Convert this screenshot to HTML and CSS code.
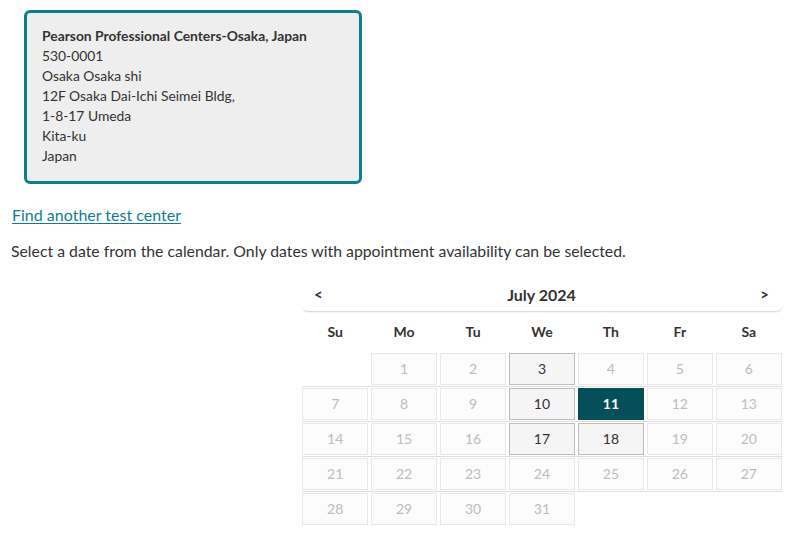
FILE: index.html
```html
<!DOCTYPE html>
<html lang="en">

<head>
    <meta charset="UTF-8" />
    <meta name="viewport" content="width=device-width, initial-scale=1.0" />
    <title>Select Appointment Date</title>
    <link rel="stylesheet" href="styles.css">
</head>

<body>
    <div class="page">
        <div class="center-card">
            <div class="center-name">Pearson Professional Centers-Osaka, Japan</div>
            <div>530-0001</div>
            <div>Osaka Osaka shi</div>
            <div>12F Osaka Dai-Ichi Seimei Bldg,</div>
            <div>1-8-17 Umeda</div>
            <div>Kita-ku</div>
            <div>Japan</div>
        </div>

        <a class="find-link" href="#">Find another test center</a>

        <p class="hint">Select a date from the calendar. Only dates with appointment availability can be selected.</p>

        <div class="calendar-wrap">
            <div class="calendar">
                <div class="cal-header">
                    <span class="nav">&lt;</span>
                    <span class="month">July 2024</span>
                    <span class="nav">&gt;</span>
                </div>
                <div class="weekdays">
                    <span>Su</span><span>Mo</span><span>Tu</span><span>We</span><span>Th</span><span>Fr</span><span>Sa</span>
                </div>
                <div class="week">
                    <span class="day empty"></span>
                    <span class="day">1</span>
                    <span class="day">2</span>
                    <span class="day open">3</span>
                    <span class="day">4</span>
                    <span class="day">5</span>
                    <span class="day">6</span>
                </div>
                <div class="week">
                    <span class="day">7</span>
                    <span class="day">8</span>
                    <span class="day">9</span>
                    <span class="day open">10</span>
                    <span class="day selected">11</span>
                    <span class="day">12</span>
                    <span class="day">13</span>
                </div>
                <div class="week">
                    <span class="day">14</span>
                    <span class="day">15</span>
                    <span class="day">16</span>
                    <span class="day open">17</span>
                    <span class="day open">18</span>
                    <span class="day">19</span>
                    <span class="day">20</span>
                </div>
                <div class="week">
                    <span class="day">21</span>
                    <span class="day">22</span>
                    <span class="day">23</span>
                    <span class="day">24</span>
                    <span class="day">25</span>
                    <span class="day">26</span>
                    <span class="day">27</span>
                </div>
                <div class="week last">
                    <span class="day">28</span>
                    <span class="day">29</span>
                    <span class="day">30</span>
                    <span class="day">31</span>
                    <span class="day empty"></span>
                    <span class="day empty"></span>
                    <span class="day empty"></span>
                </div>
            </div>
        </div>
    </div>
</body>

</html>
```

FILE: styles.css
```css
body {
    margin: 0;
    padding: 0;
    background: #ffffff;
    font-family: 'Lato', 'Open Sans', sans-serif;
    color: #333;
}

.page {
    padding: 10px 10px 0 11px;
}

.center-card {
    box-sizing: border-box;
    width: 338px;
    margin-left: 13px;
    padding: 13px 15px 15px 15px;
    background: #eeeeee;
    border: 3px solid #0e7c91;
    border-radius: 6px;
    font-size: 13.85px;
    line-height: 20px;
    color: #333;
}

.center-name {
    font-weight: 700;
}

.find-link {
    display: inline-block;
    margin-top: 20px;
    margin-left: 1px;
    font-size: 16px;
    line-height: 22px;
    color: #0e7c91;
    text-decoration: underline;
    text-underline-offset: 2px;
}

.hint {
    margin: 14px 0 0 0;
    font-size: 15.8px;
    line-height: 22px;
    color: #333;
}

.calendar-wrap {
    display: flex;
    justify-content: flex-end;
    margin-top: 16px;
}

.calendar {
    width: 480px;
}

.cal-header {
    display: flex;
    justify-content: space-between;
    align-items: center;
    height: 32px;
    padding: 0 13px 1px 12px;
    box-sizing: border-box;
    height: 34px;
    border-bottom: 1px solid #dcdcdc;
    border-radius: 0 0 6px 6px;
    box-shadow: 0 1px 1px rgba(0, 0, 0, 0.05);
}

.month {
    font-size: 16px;
    font-weight: 700;
}

.nav {
    font-size: 15px;
    font-weight: 700;
}

.weekdays {
    display: grid;
    grid-template-columns: repeat(7, 1fr);
    column-gap: 2.5px;
    height: 38px;
    padding-bottom: 2px;
    align-items: center;
    text-align: center;
    font-size: 14px;
    font-weight: 700;
}

.week {
    display: grid;
    grid-template-columns: repeat(7, 1fr);
    column-gap: 2.5px;
    padding: 1px 0;
    border-bottom: 1px solid #dedede;
}

.week.last {
    border-bottom: none;
}

.day {
    box-sizing: border-box;
    height: 32px;
    line-height: 30px;
    text-align: center;
    font-size: 14px;
    color: #bdbdbd;
    background: #fcfcfc;
    border: 1px solid #e8e8e8;
}

.day.empty {
    background: transparent;
    border-color: transparent;
}

.day.open {
    color: #333;
    background: #f5f5f5;
    border-color: #bdbdbd;
}

.day.selected {
    color: #ffffff;
    font-weight: 700;
    background: #054f5a;
    border-color: #054f5a;
}
```
